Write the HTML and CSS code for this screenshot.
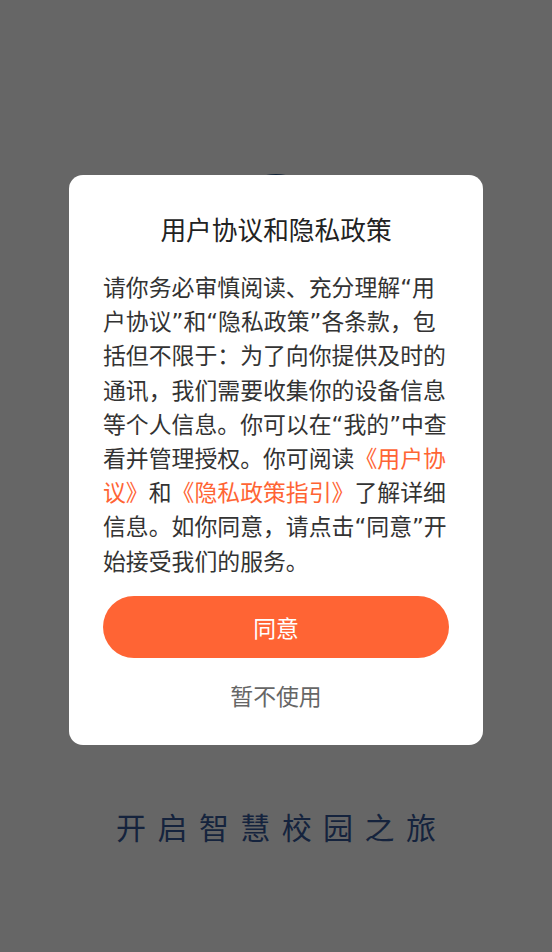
FILE: index.html
```html
<!DOCTYPE html>
<html lang="zh-CN">
<head>
<meta charset="utf-8">
<title>用户协议和隐私政策</title>
<link rel="stylesheet" href="styles.css">
</head>
<body>
<div class="splash">
  <div class="logo"></div>
  <div class="slogan">开启智慧校园之旅</div>
</div>
<div class="mask">
  <div class="dialog">
    <h1 class="dialog-title">用户协议和隐私政策</h1>
    <p class="dialog-text">请你务必审慎阅读、充分理解“用户协议”和“隐私政策”各条款，包括但不限于：为了向你提供及时的通讯，我们需要收集你的设备信息等个人信息。你可以在“我的”中查看并管理授权。你可阅读<span class="link">《用户协议》</span>和<span class="link">《隐私政策指引》</span>了解详细信息。如你同意，请点击“同意”开始接受我们的服务。</p>
    <button class="btn-agree">同意</button>
    <div class="btn-refuse">暂不使用</div>
  </div>
</div>
</body>
</html>
```

FILE: styles.css
```css
* { box-sizing: border-box; }
html, body {
  margin: 0;
  padding: 0;
  width: 100%;
  height: 100%;
}
body {
  background: #ffffff;
  font-family: Roboto, "Noto Sans CJK SC", sans-serif;
  overflow: hidden;
}
.splash {
  height: 952px;
  display: flex;
  flex-direction: column;
  align-items: center;
  justify-content: space-between;
  padding: 174px 0 106px;
}
.logo {
  width: 100px;
  height: 100px;
  border-radius: 50%;
  background: #2a5688;
}
.slogan {
  font-family: "Noto Sans CJK SC", sans-serif;
  font-size: 30px;
  font-weight: 400;
  line-height: 40px;
  letter-spacing: 11.4px;
  margin-right: -11.4px;
  color: #36599a;
}
.mask {
  position: fixed;
  inset: 0;
  background: rgba(0, 0, 0, 0.6);
  display: flex;
  justify-content: center;
  align-items: flex-start;
  padding-top: 175px;
}
.dialog {
  width: 414px;
  background: #ffffff;
  border-radius: 14px;
  padding: 38px 34px 30px;
  display: flex;
  flex-direction: column;
  align-items: stretch;
}
.dialog-title {
  margin: 0;
  font-size: 25.7px;
  line-height: 36px;
  font-weight: 400;
  color: #222222;
  text-align: center;
}
.dialog-text {
  margin: 22px 0 0;
  font-family: "DejaVu Sans", "Noto Sans CJK SC", sans-serif;
  font-size: 22.86px;
  line-height: 34.2px;
  color: #333333;
}
.link {
  color: #ff6434;
}
.btn-agree {
  margin-top: 17px;
  height: 62px;
  border: none;
  border-radius: 31px;
  background: #ff6434;
  color: #ffffff;
  font-family: Roboto, "Noto Sans CJK SC", sans-serif;
  font-size: 22.86px;
  padding: 0;
}
.btn-refuse {
  margin-top: 23px;
  font-size: 22.86px;
  line-height: 34px;
  color: #666666;
  text-align: center;
}
```
